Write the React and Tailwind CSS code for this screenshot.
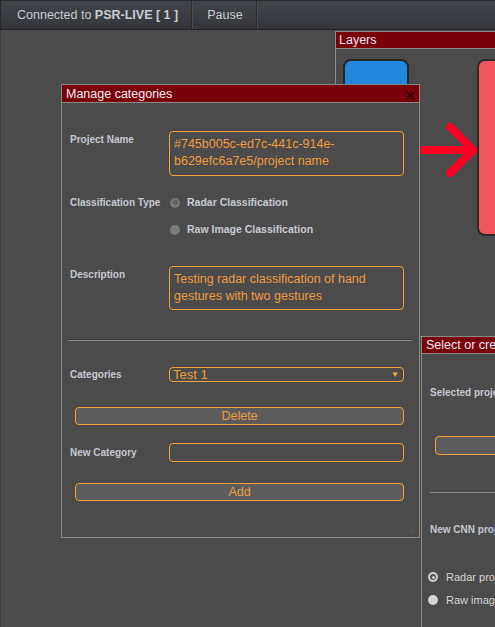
import React from "react";

const font = { fontFamily: '"Liberation Sans", Arial, sans-serif' };

function Radio({ checked, light }) {
  if (light) {
    return checked ? (
      <span className="w-[10px] h-[10px] rounded-full bg-[#d0d0d0] flex items-center justify-center shrink-0">
        <span className="w-[6px] h-[6px] rounded-full bg-[#555] flex items-center justify-center">
          <span className="w-[3px] h-[3px] rounded-full bg-[#cfcfcf]" />
        </span>
      </span>
    ) : (
      <span className="w-[10px] h-[10px] rounded-full bg-[#d4d4d4] shrink-0" />
    );
  }
  return checked ? (
    <span className="w-[10px] h-[10px] rounded-full bg-[#777] flex items-center justify-center shrink-0">
      <span className="w-[5px] h-[5px] rounded-full bg-[#626262]" />
    </span>
  ) : (
    <span className="w-[10px] h-[10px] rounded-full bg-[#7c7c7c] shrink-0" />
  );
}

function Label({ children, className = "" }) {
  return (
    <div className={"w-[99px] shrink-0 text-[10px] font-bold text-[#c6c9d1] leading-[12px] " + className}>
      {children}
    </div>
  );
}

export default function App() {
  return (
    <div style={font} className="w-[495px] h-[627px] overflow-hidden bg-[#4b4b4b] flex flex-col">
      {/* top bar */}
      <div className="h-[30px] shrink-0 flex bg-gradient-to-b from-[#414448] to-[#34363a] border-t border-t-[#2a2a2a] border-b border-b-[#222] border-l border-l-[#2a2a2a]">
        <div className="pl-[16px] pr-[13px] flex items-center text-[12.5px] text-[#c9ccd2] border-r border-r-[#2a2c2f]">
          <span>Connected to&nbsp;</span>
          <span className="font-bold">PSR-LIVE [ 1 ]</span>
        </div>
        <div className="pl-[14px] pr-[13px] flex items-center text-[12.5px] text-[#c9ccd2] border-l border-l-[#4a4d52] border-r border-r-[#2a2c2f]">
          Pause
        </div>
        <div className="flex-1 border-l border-l-[#4a4d52]" />
      </div>

      {/* desktop */}
      <div className="relative flex-1 border-l border-l-[#3a3a3a]">
        {/* Layers panel */}
        <div className="absolute left-[334px] top-[1px] w-[170px] h-[306px] border border-[#8a8a8a] flex flex-col">
          <div className="h-[17px] bg-[#780008] border-b border-b-[#8a8a8a] px-[3px] text-[12.5px] leading-[16px] text-[#ece6f6]">
            Layers
          </div>
          <div className="relative flex-1">
            <div className="absolute left-[7px] top-[10px] w-[66px] h-[80px] rounded-[8px] bg-[#2288dd] border-2 border-[#262626]" />
            <div className="absolute left-[141px] top-[10px] w-[40px] h-[177px] rounded-[8px] bg-[#f2555c] border-2 border-[#2a2a2a]" />
            <svg className="absolute left-[60px] top-[73px]" width="90" height="56" viewBox="0 0 90 56">
              <path d="M0 28 H78" stroke="#ff0024" strokeWidth="8" fill="none" />
              <path d="M54 5 L77 28 L54 51" stroke="#ff0024" strokeWidth="8" strokeLinecap="round" strokeLinejoin="round" fill="none" />
            </svg>
          </div>
        </div>

        {/* Select or create panel */}
        <div className="absolute left-[420px] top-[306px] w-[100px] h-[320px] border border-[#8a8a8a] flex flex-col">
          <div className="h-[17px] bg-[#780008] border-b border-b-[#8a8a8a] px-[4px] text-[12.5px] leading-[16px] text-[#f2eef4] whitespace-nowrap">
            Select or create project
          </div>
          <div className="flex flex-col pl-[8px]">
            <div className="mt-[33px] text-[10px] font-bold text-[#c6c9d1] leading-[12px] whitespace-nowrap">Selected project</div>
            <div className="mt-[37px] ml-[5px] h-[19px] w-[120px] rounded-[4px] border border-[#f3a13b] bg-[#5c5c5c]" />
            <div className="mt-[37px] h-px w-[120px] bg-[#8a8a8a]" />
            <div className="mt-[31px] text-[10px] font-bold text-[#c6c9d1] leading-[12px] whitespace-nowrap">New CNN project</div>
            <div className="mt-[34px] flex items-center gap-[8px] -ml-[2px] h-[14px]">
              <Radio light checked />
              <span className="text-[11px] text-[#d6d6d6] whitespace-nowrap">Radar project</span>
            </div>
            <div className="mt-[9px] flex items-center gap-[8px] -ml-[2px] h-[14px]">
              <Radio light />
              <span className="text-[11px] text-[#d6d6d6] whitespace-nowrap">Raw image project</span>
            </div>
          </div>
        </div>

        {/* Manage categories dialog */}
        <div className="absolute left-[60px] top-[54px] w-[359px] h-[454px] border border-[#8a8a8a] bg-[#4b4b4b] flex flex-col">
          <div className="h-[18px] bg-[#780008] border-b border-b-[#8a8a8a] pl-[4px] pr-[4px] flex items-center justify-between">
            <span className="text-[12.5px] leading-[16px] text-[#f4eef4]">Manage categories</span>
            <svg width="9" height="9" viewBox="0 0 9 9" className="mt-[3px]">
              <path d="M1 1 L8 8 M8 1 L1 8" stroke="#2e0306" strokeWidth="1.8" />
            </svg>
          </div>
          <div className="flex flex-col pl-[8px] pr-[13px]">
            {/* Project name */}
            <div className="mt-[28px] flex">
              <Label className="pt-[3px]">Project Name</Label>
              <div className="w-[235px] h-[45px] rounded-[4px] border border-[#f3a13b] px-[4px] pt-[4px] text-[12.5px] leading-[17px] text-[#f19d3c]">
                #745b005c-ed7c-441c-914e-
                <br />
                b629efc6a7e5/project name
              </div>
            </div>
            {/* Classification */}
            <div className="mt-[20px] flex">
              <Label className="pt-[1px]">Classification Type</Label>
              <div className="flex flex-col gap-[14px]">
                <div className="flex items-center gap-[7px] h-[13px] pl-[1px]">
                  <Radio checked />
                  <span className="text-[10.5px] font-bold text-[#c8cbd3]">Radar Classification</span>
                </div>
                <div className="flex items-center gap-[7px] h-[13px] pl-[1px]">
                  <Radio />
                  <span className="text-[10.5px] font-bold text-[#c8cbd3]">Raw Image Classification</span>
                </div>
              </div>
            </div>
            {/* Description */}
            <div className="mt-[30px] flex">
              <Label className="pt-[3px]">Description</Label>
              <div className="w-[235px] h-[44px] rounded-[4px] border border-[#f3a13b] px-[4px] pt-[4px] text-[12.5px] leading-[17px] text-[#f19d3c]">
                Testing radar classification of hand
                <br />
                gestures with two gestures
              </div>
            </div>
            {/* separator */}
            <div className="mt-[29px] -ml-[2px] mr-[-6px] h-[2px] border-t border-t-[#3a3a3a] bg-[#8a8a8a]" />
            {/* Categories */}
            <div className="mt-[26px] flex items-center">
              <Label>Categories</Label>
              <div className="w-[235px] h-[15px] rounded-[4px] border border-[#f3a13b] pl-[3px] pr-[4px] flex items-center justify-between">
                <span className="text-[13px] leading-[13px] text-[#f19d3c]">Test 1</span>
                <span className="text-[8px] leading-[8px] text-[#f3b04a]">▼</span>
              </div>
            </div>
            <div className="mt-[25px] ml-[5px] w-[329px] h-[18px] rounded-[4px] border border-[#f3a13b] bg-[#5c5c5c] flex items-center justify-center text-[12.5px] text-[#f19d3c]">
              Delete
            </div>
            {/* New category */}
            <div className="mt-[18px] flex items-center">
              <Label>New Category</Label>
              <div className="w-[235px] h-[19px] rounded-[4px] border border-[#f3a13b]" />
            </div>
            <div className="mt-[21px] ml-[5px] w-[329px] h-[18px] rounded-[4px] border border-[#f3a13b] bg-[#5c5c5c] flex items-center justify-center text-[12.5px] text-[#f19d3c]">
              Add
            </div>
          </div>
          <svg className="absolute right-[3px] bottom-[3px]" width="8" height="8" viewBox="0 0 8 8">
            <path d="M1 7 L7 1 M4 7 L7 4" stroke="#5e5e5e" strokeWidth="1" />
          </svg>
        </div>
      </div>
    </div>
  );
}
